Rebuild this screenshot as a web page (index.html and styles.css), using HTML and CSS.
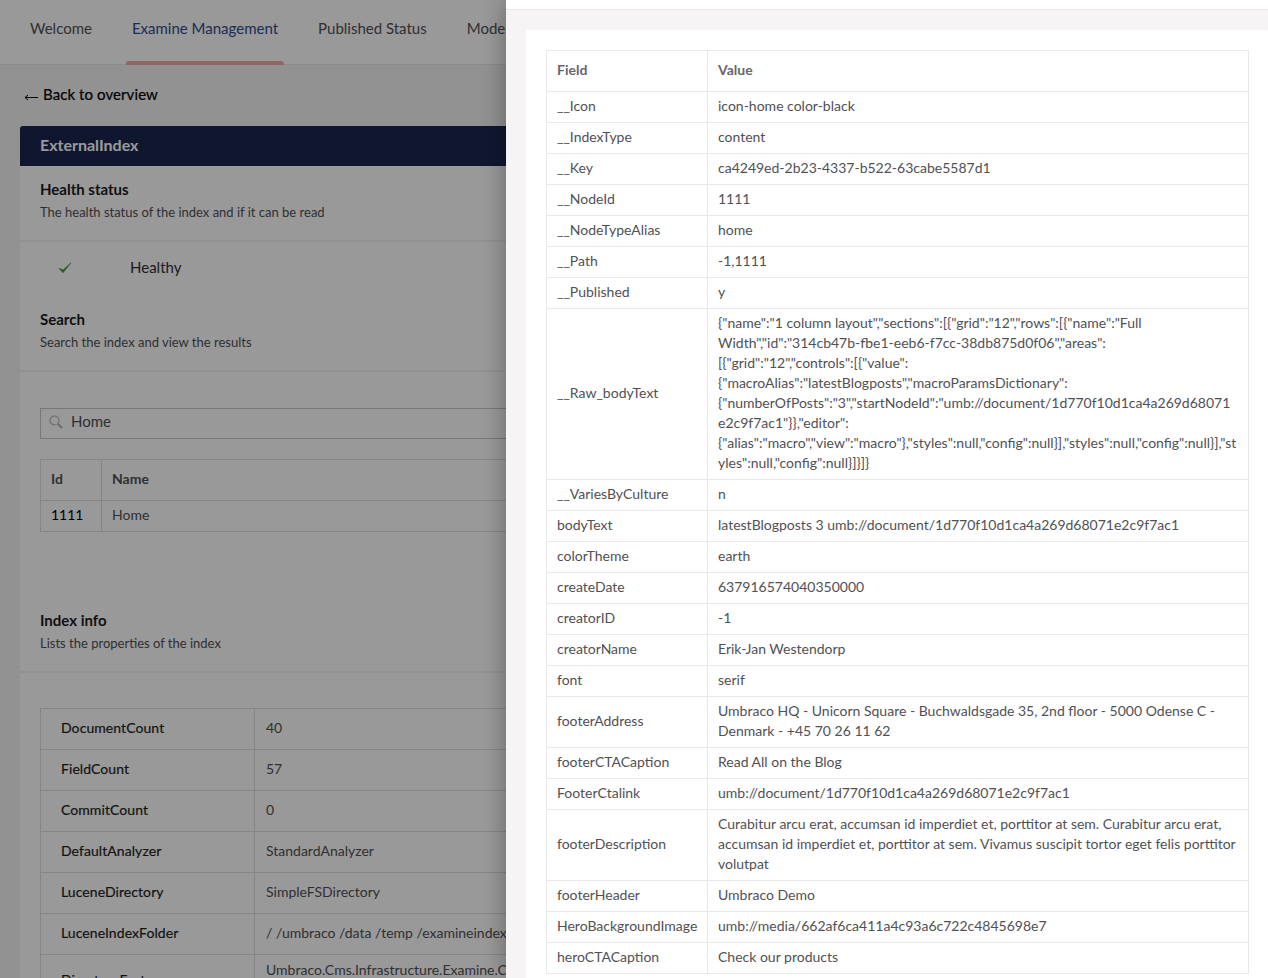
FILE: index.html
```html
<!DOCTYPE html>
<html lang="en">
<head>
<meta charset="utf-8">
<title>Examine Management</title>
<link rel="stylesheet" href="styles.css">
</head>
<body>
<div class="app">
  <nav class="tabs">
    <a class="tab">Welcome</a>
    <a class="tab active">Examine Management</a>
    <a class="tab">Published Status</a>
    <a class="tab">Models Builder</a>
  </nav>
  <main class="content">
    <a class="back">
      <svg class="arrow" viewBox="0 0 14 8" width="14" height="8" aria-hidden="true"><path d="M1 4.5h13M1 4.5l3-2.5M1 4.5l3 2.5" fill="none" stroke="#000" stroke-width="1"/></svg>
      <span>Back to overview</span>
    </a>
    <section class="card">
      <h2 class="card-title">ExternalIndex</h2>
      <header class="section-head">
        <h3>Health status</h3>
        <p>The health status of the index and if it can be read</p>
      </header>
      <div class="health">
        <svg class="check" viewBox="0 0 16 14" width="14" height="12" aria-hidden="true"><path d="M1 7.5l4.6 5L15 1 5.8 9.2z" fill="#3c9a45" stroke="#3c9a45" stroke-width=".8" stroke-linejoin="round"/></svg>
        <span class="health-label">Healthy</span>
      </div>
      <header class="section-head search-head">
        <h3>Search</h3>
        <p>Search the index and view the results</p>
      </header>
      <div class="search-body">
        <div class="search-box">
          <svg class="lens" viewBox="0 0 14 14" width="14" height="14" aria-hidden="true"><circle cx="5.5" cy="5.5" r="4.5" fill="none" stroke="#b3b3b3" stroke-width="1.2"/><path d="M9 9l4 4" stroke="#b3b3b3" stroke-width="2"/></svg>
          <span>Home</span>
        </div>
        <table class="tbl results">
          <thead><tr><th class="c-id">Id</th><th>Name</th></tr></thead>
          <tbody><tr><td class="strong">1111</td><td>Home</td></tr></tbody>
        </table>
      </div>
      <header class="section-head">
        <h3>Index info</h3>
        <p>Lists the properties of the index</p>
      </header>
      <div class="info-body">
        <table class="tbl info">
          <tbody>
            <tr><th>DocumentCount</th><td>40</td></tr>
            <tr><th>FieldCount</th><td>57</td></tr>
            <tr><th>CommitCount</th><td>0</td></tr>
            <tr><th>DefaultAnalyzer</th><td>StandardAnalyzer</td></tr>
            <tr><th>LuceneDirectory</th><td>SimpleFSDirectory</td></tr>
            <tr><th>LuceneIndexFolder</th><td>/ /umbraco /data /temp /examineindexes /external</td></tr>
            <tr><th>DirectoryFactory</th><td>Umbraco.Cms.Infrastructure.Examine.ConfigurationEnabledDirectoryFactory,<br>Umbraco.Examine.Lucene</td></tr>
          </tbody>
        </table>
      </div>
    </section>
  </main>
</div>
<div class="backdrop"></div>
<aside class="panel">
  <div class="panel-top"></div>
  <div class="panel-card">
    <table class="fields">
      <thead><tr><th class="c-field">Field</th><th>Value</th></tr></thead>
      <tbody>
        <tr><td>__Icon</td><td>icon-home color-black</td></tr>
        <tr><td>__IndexType</td><td>content</td></tr>
        <tr><td>__Key</td><td>ca4249ed-2b23-4337-b522-63cabe5587d1</td></tr>
        <tr><td>__NodeId</td><td>1111</td></tr>
        <tr><td>__NodeTypeAlias</td><td>home</td></tr>
        <tr><td>__Path</td><td>-1,1111</td></tr>
        <tr><td>__Published</td><td>y</td></tr>
        <tr><td>__Raw_bodyText</td><td>{"name":"1 column layout","sections":[{"grid":"12","rows":[{"name":"Full Width","id":"314cb47b-fbe1-eeb6-f7cc-38db875d0f06","areas":[{"grid":"12","controls":[{"value":{"macroAlias":"latestBlogposts","macroParamsDictionary":{"numberOfPosts":"3","startNodeId":"umb://document/1d770f10d1ca4a269d68071e2c9f7ac1"}},"editor":{"alias":"macro","view":"macro"},"styles":null,"config":null}],"styles":null,"config":null}],"styles":null,"config":null}]}]}</td></tr>
        <tr><td>__VariesByCulture</td><td>n</td></tr>
        <tr><td>bodyText</td><td>latestBlogposts 3 umb://document/1d770f10d1ca4a269d68071e2c9f7ac1</td></tr>
        <tr><td>colorTheme</td><td>earth</td></tr>
        <tr><td>createDate</td><td>637916574040350000</td></tr>
        <tr><td>creatorID</td><td>-1</td></tr>
        <tr><td>creatorName</td><td>Erik-Jan Westendorp</td></tr>
        <tr><td>font</td><td>serif</td></tr>
        <tr><td>footerAddress</td><td>Umbraco HQ - Unicorn Square - Buchwaldsgade 35, 2nd floor - 5000 Odense C - Denmark - +45 70 26 11 62</td></tr>
        <tr><td>footerCTACaption</td><td>Read All on the Blog</td></tr>
        <tr><td>FooterCtalink</td><td>umb://document/1d770f10d1ca4a269d68071e2c9f7ac1</td></tr>
        <tr><td>footerDescription</td><td>Curabitur arcu erat, accumsan id imperdiet et, porttitor at sem. Curabitur arcu erat, accumsan id imperdiet et, porttitor at sem. Vivamus suscipit tortor eget felis porttitor volutpat</td></tr>
        <tr><td>footerHeader</td><td>Umbraco Demo</td></tr>
        <tr><td>HeroBackgroundImage</td><td>umb://media/662af6ca411a4c93a6c722c4845698e7</td></tr>
        <tr><td>heroCTACaption</td><td>Check our products</td></tr>
      </tbody>
    </table>
  </div>
</aside>
</body>
</html>
```
FILE: styles.css
```css
* { box-sizing: border-box; }
html, body { margin: 0; height: 100%; overflow: hidden; }
body {
  font-family: Lato, "Open Sans", sans-serif;
  font-size: 14px;
  line-height: 20px;
  color: #303033;
  background: #f3f3f5;
}
.app { width: 1268px; height: 978px; overflow: hidden; }
.tabs {
  display: flex;
  height: 65px;
  padding-left: 10px;
  background: #fff;
  border-bottom: 1px solid #e9e9eb;
}
.tab {
  position: relative;
  padding: 18px 20px 0;
  font-size: 15px;
  line-height: 20px;
  color: #515054;
  white-space: nowrap;
}
.tab.active { color: #2f4b8f; }
.tab.active::after {
  content: "";
  position: absolute;
  left: 14px;
  right: 14px;
  bottom: -1px;
  height: 4px;
  border-radius: 3px 3px 0 0;
  background: #f5a9a0;
}
.content { padding: 20px 20px 20px; }
.back {
  display: flex;
  align-items: center;
  gap: 5px;
  height: 41px;
  padding: 0 0 23px 4px;
  font-size: 15px;
  line-height: 20px;
  letter-spacing: .006em;
  -webkit-text-stroke: .2px #000;
  color: #000;
}
.arrow { flex: none; margin-top: 5px; }
.card {
  width: 1228px;
  background: #fff;
  border-radius: 3px;
}
.card-title {
  margin: 0;
  height: 40px;
  padding: 0 20px;
  font-size: 16px;
  line-height: 38px;
  font-weight: 700;
  color: #fff;
  background: #1b264f;
  border-radius: 3px 3px 0 0;
}
.section-head {
  padding: 13px 20px 18px;
  border-bottom: 2px solid #f3f3f5;
}
.section-head h3 {
  margin: 0 0 3px;
  font-size: 15px;
  line-height: 20px;
  font-weight: 700;
  color: #1b1b1f;
}
.section-head p {
  margin: 0;
  font-size: 13px;
  line-height: 20px;
  color: #515054;
}
.health {
  display: flex;
  align-items: center;
  height: 52px;
  padding: 0 0 1px 38px;
  font-size: 15px;
  color: #303033;
}
.health-label { margin-bottom: 2px; }
.check { margin-right: 58px; }
.search-head { padding-top: 15px; }
.search-body { padding: 36px 20px 0; height: 225px; }
.search-box {
  display: flex;
  align-items: center;
  gap: 8px;
  height: 31px;
  padding: 0 8px 5px;
  border: 1px solid #c9c8ca;
  font-size: 15px;
  color: #515054;
  margin-bottom: 20px;
}
.lens { flex: none; margin-top: 1px; }
.tbl {
  width: 100%;
  border-collapse: collapse;
  table-layout: fixed;
  border: 1px solid #e0e0e2;
}
.tbl th, .tbl td {
  border: 1px solid #e0e0e2;
  text-align: left;
  vertical-align: middle;
}
.results th { height: 41px; padding: 0 10px 2px; font-weight: 700; color: #515054; }
.results td { height: 31px; padding: 0 10px 2px; color: #515054; }
.results .strong { color: #000; }
.c-id { width: 61px; }
.info-body { padding: 35px 20px 0; }
.info th {
  width: 214px;
  height: 41px;
  padding: 0 20px 2px;
  font-weight: 400;
  -webkit-text-stroke: .2px #1f1f22;
  letter-spacing: .005em;
  color: #1f1f22;
}
.info td { height: 41px; padding: 5px 10px 7px 11px; color: #515054; white-space: nowrap; }
.backdrop {
  position: fixed;
  inset: 0;
  background: rgba(0, 0, 0, .4);
}
.panel {
  position: fixed;
  top: 0;
  right: 0;
  bottom: 0;
  width: 762px;
  overflow: hidden;
  background: #f6f4f4;
  box-shadow: 0 0 25px rgba(0, 0, 0, .35);
}
.panel-top {
  height: 10px;
  background: #fff;
  border-bottom: 1px solid #e9e9eb;
}
.panel-card {
  margin: 20px 0 0 20px;
  padding: 20px 19px 20px 20px;
  background: #fff;
  border-radius: 3px;
}
.fields {
  width: 703px;
  border-collapse: collapse;
  table-layout: fixed;
  font-size: 14px;
  line-height: 20px;
  color: #515054;
}
.fields th, .fields td {
  border: 1px solid #e9e9eb;
  padding: 4px 11px 6px 10px;
  text-align: left;
  vertical-align: middle;
  overflow-wrap: break-word;
}
.fields td:first-child { padding-right: 0; }
.fields th { padding: 9px 10px 11px; font-weight: 700; color: #68676b; }
.c-field { width: 161px; }
```
